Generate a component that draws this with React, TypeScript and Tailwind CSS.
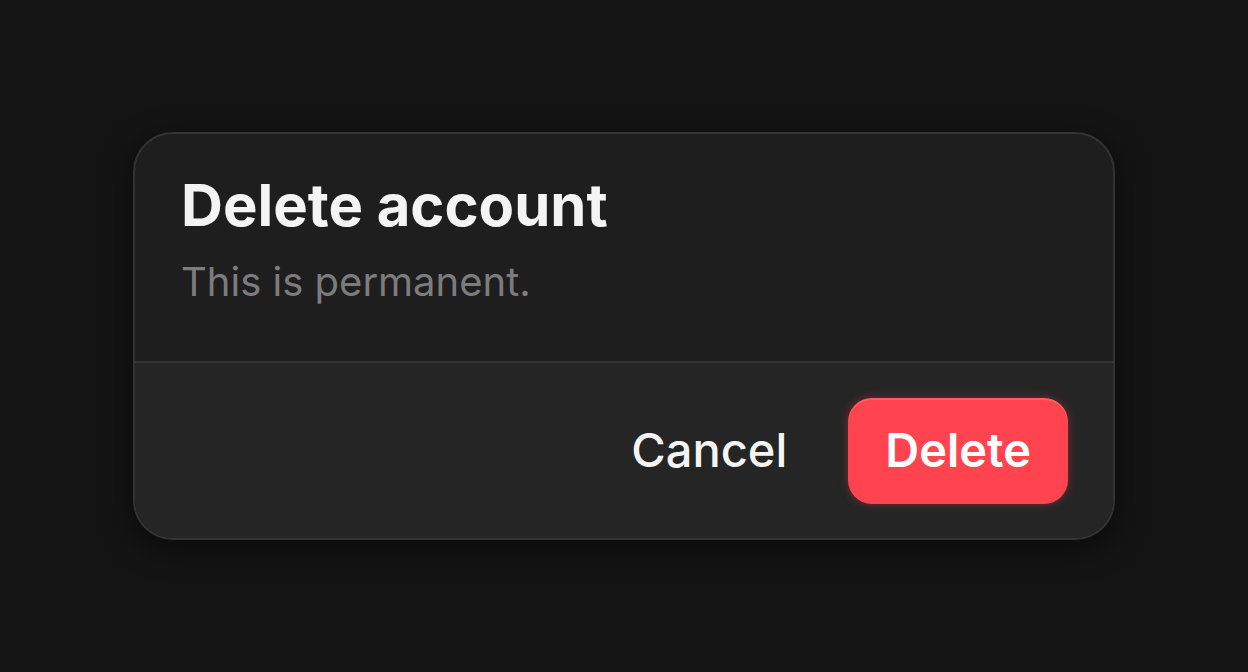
export default function App() {
  return (
    <div
      className="flex h-[672px] w-full items-center justify-center bg-[#141414]"
      style={{ fontFamily: "Inter, 'Noto Sans', sans-serif" }}
    >
      <div className="w-[982px] overflow-hidden rounded-[40px] border-2 border-[#333333] bg-[#1e1e1e] shadow-[0_8px_30px_rgba(0,0,0,0.5)]">
        {/* Header */}
        <div className="h-[227px] px-[46px] pt-[36px]">
          <h1 className="text-[58px] font-bold leading-[70px] text-[#f4f4f4]">Delete account</h1>
          <p className="mt-[18px] text-[40px] leading-[48px] text-[#7c7c7c]">This is permanent.</p>
        </div>
        {/* Footer */}
        <div className="flex h-[177px] items-center justify-end gap-[24px] border-t-2 border-[#333333] bg-[#252525] pr-[45px]">
          <button className="h-[106px] rounded-[24px] px-[37px] text-[47px] font-medium text-[#f4f4f4]">
            Cancel
          </button>
          <button className="h-[106px] rounded-[24px] bg-[#ff434f] px-[37px] text-[47px] font-semibold text-white shadow-[0_0_10px_rgba(255,67,79,0.35),inset_0_2px_0_rgba(255,255,255,0.15)]">
            Delete
          </button>
        </div>
      </div>
    </div>
  );
}
